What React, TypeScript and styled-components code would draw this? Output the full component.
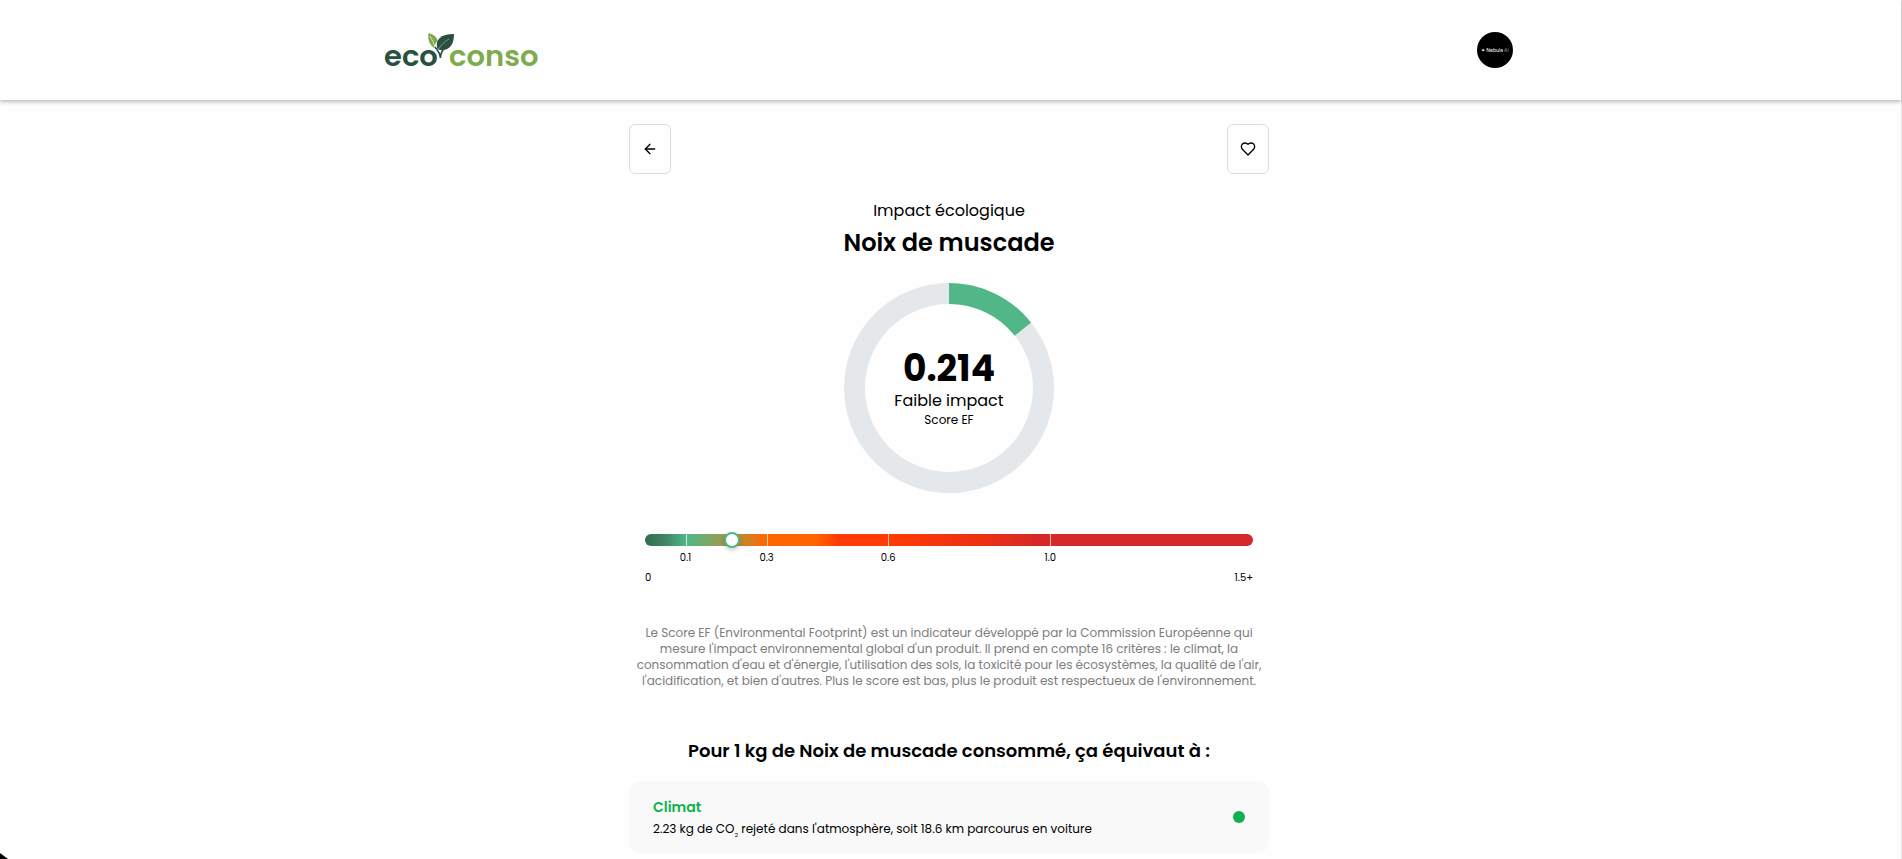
import React from "react";
import styled, { createGlobalStyle } from "styled-components";
import { ArrowLeft } from "lucide-react";

const GlobalStyle = createGlobalStyle`
  *, *::before, *::after { box-sizing: border-box; }
  body {
    margin: 0;
    background: #fefefe;
    color: #000;
    font-family: Poppins, Inter, "Liberation Sans", sans-serif;
    overflow: hidden;
  }
  h1, h2, h3, p { margin: 0; }
`;

const Page = styled.div`
  min-height: 100vh;
  border-right: 1px solid #e4e4e4;
`;

const Header = styled.header`
  height: 100px;
  padding-right: 3px;
  display: flex;
  align-items: center;
  justify-content: center;
  background: #fefefe;
  box-shadow: 0 2px 4px rgba(20, 40, 35, 0.3);
`;

const HeaderInner = styled.div`
  width: 100%;
  max-width: 1128px;
  display: flex;
  align-items: center;
  justify-content: space-between;
`;

const LogoLink = styled.a`
  display: block;
  line-height: 0;
`;

const LogoText = styled.text<{ $tone: string }>`
  font-family: Poppins, Inter, sans-serif;
  font-size: 29px;
  font-weight: 600;
  fill: ${(p) => p.$tone};
`;

const Avatar = styled.button`
  width: 36px;
  height: 36px;
  padding: 0;
  border: 0;
  border-radius: 50%;
  background: #000;
  color: #fff;
  display: flex;
  align-items: center;
  justify-content: center;
  gap: 1px;
  font-family: Inter, sans-serif;
  font-size: 5px;
  line-height: 8px;
  white-space: nowrap;
`;

const AvatarSuffix = styled.span`
  color: #8a8a8a;
`;

const Main = styled.main`
  padding: 24px 3px 0 0;
  display: flex;
  justify-content: center;
`;

const Column = styled.div`
  width: 100%;
  max-width: 640px;
  display: flex;
  flex-direction: column;
`;

const Toolbar = styled.div`
  display: flex;
  justify-content: space-between;
`;

const IconButton = styled.button`
  width: 42px;
  height: 50px;
  padding: 0;
  display: flex;
  align-items: center;
  justify-content: center;
  border: 1px solid #dcdcdc;
  border-radius: 6px;
  background: #fefefe;
  color: #000;
`;

const Overline = styled.p`
  margin-top: 25px;
  font-size: 16px;
  line-height: 24px;
  text-align: center;
`;

const Title = styled.h1`
  margin-top: 4px;
  font-size: 24px;
  line-height: 32px;
  font-weight: 600;
  text-align: center;
`;

const Gauge = styled.div`
  width: 210px;
  height: 210px;
  margin: 24px auto 0;
  display: grid;
  place-items: center;

  > * {
    grid-area: 1 / 1;
  }
`;

const GaugeText = styled.div`
  display: flex;
  flex-direction: column;
  align-items: center;
`;

const Score = styled.strong`
  font-size: 36px;
  line-height: 40px;
  font-weight: 700;
`;

const Verdict = styled.span`
  font-size: 16px;
  line-height: 24px;
`;

const Unit = styled.span`
  font-size: 12px;
  line-height: 14px;
`;

const Scale = styled.div`
  margin: 41px 16px 0;
`;

const Bar = styled.div`
  position: relative;
  height: 12px;
  border-radius: 6px;
  background: linear-gradient(
    90deg,
    #2f6d52 0%,
    #3f8262 3%,
    #52b788 7%,
    #8fa055 12%,
    #d67f20 17%,
    #ff6600 20%,
    #ff6400 28%,
    #ff3a05 32%,
    #ff3a05 41%,
    #ec3013 55%,
    #d62828 65%,
    #d62828 100%
  );
`;

const Tick = styled.span`
  position: absolute;
  top: 0;
  width: 1px;
  height: 12px;
  background: rgba(255, 255, 255, 0.7);
`;

const TickLabel = styled.span`
  position: absolute;
  top: 16px;
  transform: translateX(-50%);
  font-size: 10px;
  line-height: 16px;
`;

const Thumb = styled.span`
  position: absolute;
  top: -2px;
  width: 16px;
  height: 16px;
  transform: translateX(-50%);
  border: 2px solid #52b788;
  border-radius: 50%;
  background: #fff;
  box-shadow: 0 2px 4px rgba(0, 0, 0, 0.2);
`;

const Bounds = styled.div`
  margin-top: 24px;
  display: flex;
  justify-content: space-between;
  font-size: 10px;
  line-height: 16px;
`;

const Note = styled.p`
  margin-top: 39px;
  padding: 0 4px;
  font-size: 12px;
  line-height: 16px;
  color: #7d7d7d;
  text-align: center;
`;

const SectionTitle = styled.h2`
  margin-top: 50px;
  font-size: 18px;
  line-height: 24px;
  font-weight: 600;
  text-align: center;
`;

const Card = styled.article`
  margin-top: 18px;
  padding: 14px 24px;
  display: flex;
  align-items: center;
  justify-content: space-between;
  border-radius: 12px;
  background: #f9f9f9;
`;

const CardTitle = styled.h3`
  font-size: 14px;
  line-height: 24px;
  font-weight: 600;
  color: #0fb14e;
`;

const CardText = styled.p`
  font-size: 12px;
  line-height: 20px;
`;

const Subscript = styled.sub`
  font-size: 6px;
  line-height: 0;
  vertical-align: -4px;
`;

const Dot = styled.span`
  width: 12px;
  height: 12px;
  border-radius: 50%;
  background: #0fb14e;
`;

const Corner = styled.div`
  position: fixed;
  left: 0;
  bottom: 0;
  width: 8px;
  height: 6px;
  background: #000;
  clip-path: polygon(0 0, 100% 100%, 0 100%);
`;

const MAX = 1.5;
const SCORE = 0.214;
const TICKS = ["0.1", "0.3", "0.6", "1.0"];
const percent = (value: number) => `${(value / MAX) * 100}%`;

const Logo = () => (
  <svg width="156" height="44" viewBox="0 0 156 44" overflow="visible" role="img" aria-label="eco conso">
    <LogoText $tone="#2a5040" x="-1" y="38">eco</LogoText>
    <LogoText $tone="#7fab4f" x="64" y="38">conso</LogoText>
    <path d="M43.500 5c6 2 8.500 4 9 8-2 2-3 4-3 7-5-3-7-8-6-15z" fill="#7fab4f" />
    <path d="M45 8c2 4 4 7 5 11" fill="none" stroke="#fefefe" strokeWidth="0.6" />
    <path d="M69 6c0 10-4 16-12 16-2 0-3 0-4.500-1-3-9 3-15 16.500-15z" fill="#2a5040" />
    <path d="M64 11c-5 3-8 6-11 11" fill="none" stroke="#fefefe" strokeWidth="0.4" />
    <path d="M50 19c3 4 5 5 5.500 11M60 20c-3 2-4 5-4.500 9" fill="none" stroke="#2a5040" strokeWidth="1.600" />
  </svg>
);

const Heart = () => (
  <svg width="16" height="16" viewBox="0 0 24 24" fill="none" stroke="currentColor" strokeWidth="2" strokeLinecap="round" strokeLinejoin="round" aria-hidden="true">
    <path d="M19 14c1.49-1.46 3-3.21 3-5.5A5.5 5.5 0 0 0 16.500 3c-1.760 0-3 .5-4.500 2-1.500-1.500-2.740-2-4.500-2A5.500 5.500 0 0 0 2 8.500c0 2.300 1.500 4.050 3 5.500l7 7Z" />
  </svg>
);

const RADIUS = 94.5;
const CIRCUMFERENCE = 2 * Math.PI * RADIUS;

const Ring = () => (
  <svg width="210" height="210" viewBox="0 0 210 210" aria-hidden="true">
    <circle cx="105" cy="105" r={RADIUS} fill="none" stroke="#e4e8eb" strokeWidth="21" />
    <circle
      cx="105"
      cy="105"
      r={RADIUS}
      fill="none"
      stroke="#52b788"
      strokeWidth="21"
      strokeDasharray={`${(SCORE / MAX) * CIRCUMFERENCE} ${CIRCUMFERENCE}`}
      transform="rotate(-90 105 105)"
    />
  </svg>
);

export default function App() {
  return (
    <Page>
      <GlobalStyle />
      <Header>
        <HeaderInner>
          <LogoLink href="#"><Logo /></LogoLink>
          <Avatar type="button">
            <span>✦</span>
            <span>Nebula</span>
            <AvatarSuffix>AI</AvatarSuffix>
          </Avatar>
        </HeaderInner>
      </Header>
      <Main>
        <Column>
          <Toolbar>
            <IconButton type="button" aria-label="Retour"><ArrowLeft size={16} /></IconButton>
            <IconButton type="button" aria-label="Ajouter aux favoris"><Heart /></IconButton>
          </Toolbar>
          <Overline>Impact écologique</Overline>
          <Title>Noix de muscade</Title>
          <Gauge>
            <Ring />
            <GaugeText>
              <Score>0.214</Score>
              <Verdict>Faible impact</Verdict>
              <Unit>Score EF</Unit>
            </GaugeText>
          </Gauge>
          <Scale>
            <Bar>
              {TICKS.map((t) => (
                <React.Fragment key={t}>
                  <Tick style={{ left: percent(Number(t)) }} />
                  <TickLabel style={{ left: percent(Number(t)) }}>{t}</TickLabel>
                </React.Fragment>
              ))}
              <Thumb style={{ left: percent(SCORE) }} />
            </Bar>
            <Bounds>
              <span>0</span>
              <span>1.5+</span>
            </Bounds>
          </Scale>
          <Note>
            Le Score EF (Environmental Footprint) est un indicateur développé par la Commission Européenne qui
            mesure l'impact environnemental global d'un produit. Il prend en compte 16 critères : le climat, la
            consommation d'eau et d'énergie, l'utilisation des sols, la toxicité pour les écosystèmes, la qualité de l'air,
            l'acidification, et bien d'autres. Plus le score est bas, plus le produit est respectueux de l'environnement.
          </Note>
          <SectionTitle>Pour 1 kg de Noix de muscade consommé, ça équivaut à :</SectionTitle>
          <Card>
            <div>
              <CardTitle>Climat</CardTitle>
              <CardText>
                2.23 kg de CO<Subscript>2</Subscript> rejeté dans l'atmosphère, soit 18.6 km parcourus en voiture
              </CardText>
            </div>
            <Dot />
          </Card>
        </Column>
      </Main>
      <Corner />
    </Page>
  );
}
